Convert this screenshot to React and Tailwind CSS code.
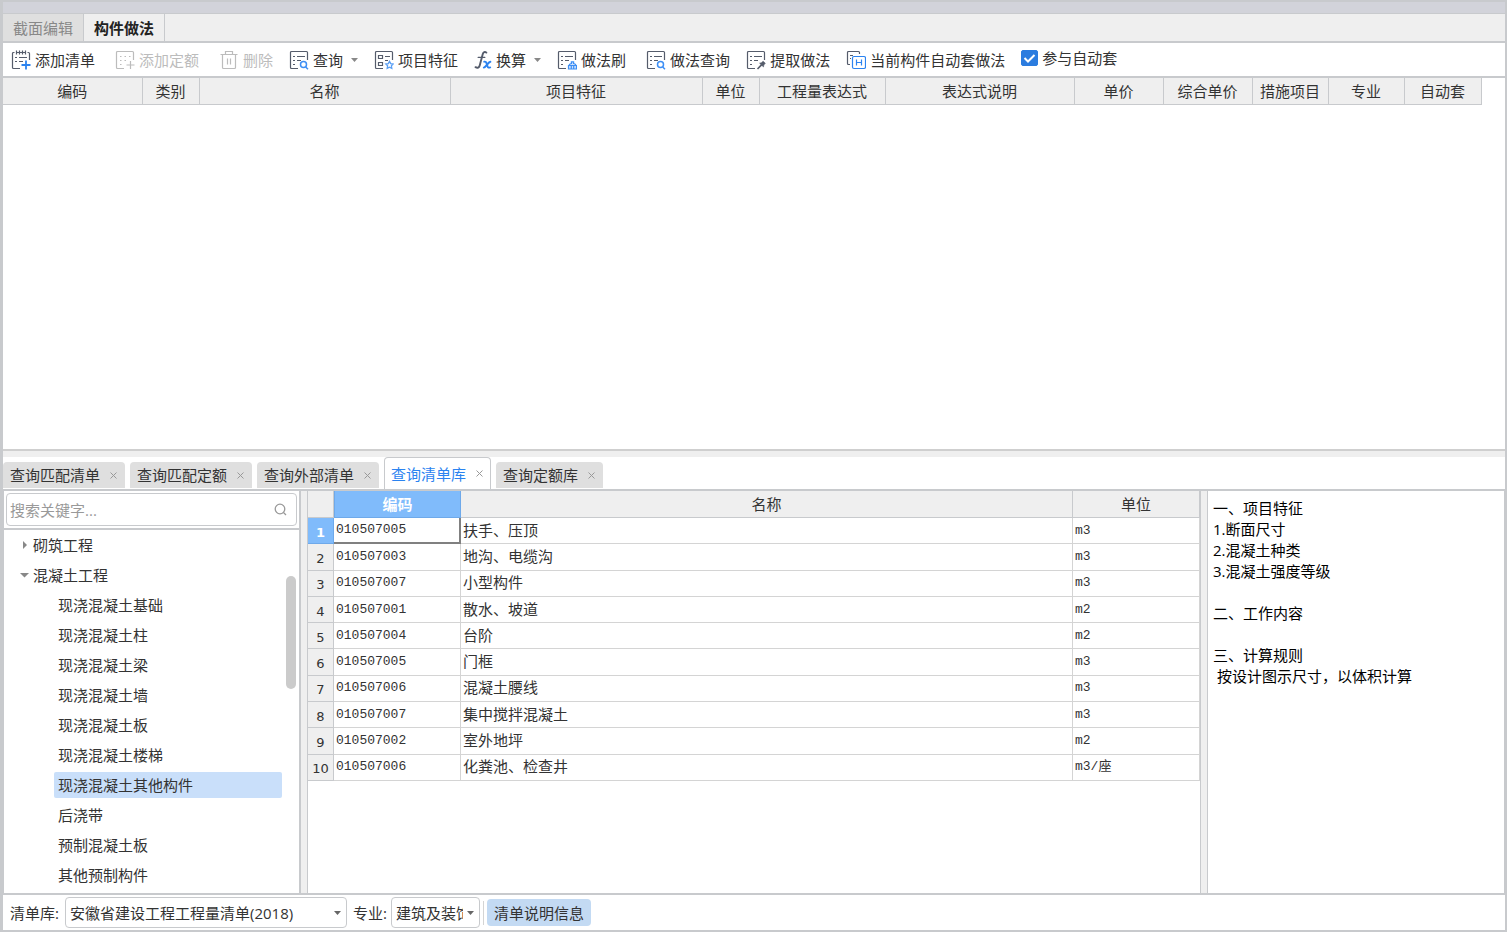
import React from 'react';

const FONT = "font-['Open_Sans','Noto_Sans_CJK_SC',sans-serif]";
const MONO = "font-['Liberation_Mono','Noto_Sans_CJK_SC',monospace]";

function Svg({ children }) {
  return (
    <svg width="20" height="20" viewBox="0 0 20 20" fill="none" stroke="currentColor"
      strokeWidth="1.2" className="shrink-0" aria-hidden="true">
      {children}
    </svg>
  );
}

// sheet outline with the lower right corner left open for a badge
function Sheet({ children }) {
  return (
    <Svg>
      <path d="M9 18.5H2.5a1 1 0 0 1-1-1v-15a1 1 0 0 1 1-1h15a1 1 0 0 1 1 1V10"/>
      {children}
    </Svg>
  );
}

const LINES = <path d="M4 6.5h2M8 6.5h8M4 10.5h2M8 10.5h4M4 14.5h2"/>;

const icons = {
  addList: (
    <Svg>
      <path d="M3.5 2.5h-1a1 1 0 0 0-1 1v14a1 1 0 0 0 1 1H9M16.5 2.5h1a1 1 0 0 1 1 1V10M5.5 2.5h9"/>
      <path d="M5.5.5v4M8.5.5v4M11.5.5v4M14.5.5v4"/>
      <path d="M4 7.5h2M8 7.5h8M4 11.5h2M8 11.5h4"/>
      <path className="stroke-[#2b83f0]" strokeWidth="1.8" d="M15 10.5v9M10.5 15h9"/>
    </Svg>
  ),
  addQuota: (
    <Sheet>
      <path d="M5 6.5h1.5M9.5 6.5H11M14 6.5h1.5M5 10.5h1.5M9.5 10.5H11M5 14.5h1.5"/>
      <path d="M15.5 11v8M11.5 15h8"/>
    </Sheet>
  ),
  trash: (
    <Svg>
      <path d="M1.5 4.5h17M6.5 4.5v-3h7v3M3.5 4.5v13a1 1 0 0 0 1 1h11a1 1 0 0 0 1-1v-13M8.5 8.5v6M11.5 8.5v6"/>
    </Svg>
  ),
  search: (
    <Sheet>
      {LINES}
      <g className="stroke-[#3d8ff5]" strokeWidth="1.5"><circle cx="14.5" cy="14.5" r="3"/><path d="m16.7 17 2.3 2.3"/></g>
    </Sheet>
  ),
  feature: (
    <Sheet>
      <path d="M4.5 5.5h4v3h-4zM4.5 12.5h4v3h-4zM11 6.5h5M11 10.5h3"/>
      <path className="stroke-[#5ba0f5]" strokeWidth="1.3" d="m15.5 11.4 1.2 2.2 2.5.4-1.8 1.8.4 2.5-2.3-1.1-2.3 1.1.4-2.5-1.8-1.8 2.5-.4z"/>
    </Sheet>
  ),
  fx: (
    <svg width="18" height="20" viewBox="0 0 18 20" fill="none" strokeLinecap="round" className="shrink-0" aria-hidden="true">
      <path stroke="currentColor" strokeWidth="1.9" d="M12.4 2.6c-1.5-1.3-3.1-.6-3.7 1.6L5.7 15.6c-.5 2-2.1 2.7-4.2 1.6"/>
      <path stroke="currentColor" strokeWidth="1.3" d="M4.2 7.4h6.6"/>
      <path className="stroke-[#2b83f0]" strokeWidth="1.9" d="M10.2 11.7c1.5-.4 2 .4 2.4 1.7l.9 2.8c.4 1.4 1.2 1.8 2.7 1.2M16.4 11.8c-2.3.2-4.2 5.4-6.6 5.8"/>
    </svg>
  ),
  brush: (
    <Sheet>
      {LINES}
      <path className="fill-[#cfe2fb] stroke-[#3d8ff5]" d="M11.5 15.5h8v3.5h-8zM12 15.3c.2-1.2 1-1.7 2.4-1.8v-1.7h2.2v1.7c1.4.1 2.2.6 2.4 1.8M14.3 15.8V19M16.7 15.8V19"/>
    </Sheet>
  ),
  extract: (
    <Sheet>
      {LINES}
      <path strokeWidth="1.6" d="m11.5 19 4.2-4.4"/>
      <path fill="currentColor" strokeWidth=".6" d="m13.6 13.2 3.9 3.7.3-1.9 1.5-1.8-2.2-2-1.7 1.6z"/>
    </Sheet>
  ),
  auto: (
    <Svg>
      <path d="M4 14.5H2.5a1 1 0 0 1-1-1v-11a1 1 0 0 1 1-1h10a1 1 0 0 1 1 1V4M4 5.5h3M4 8.5h1"/>
      <g className="stroke-[#2b83f0]">
        <rect x="6.5" y="6.5" width="13" height="12" rx="1.5"/>
        <path d="M10.5 9.5v6M15.5 9.5v6M10.5 12.5h5"/>
      </g>
    </Svg>
  ),
};

const tools = [
  { label: '添加清单', icon: 'addList' },
  { label: '添加定额', icon: 'addQuota', disabled: true, wide: true },
  { label: '删除', icon: 'trash', disabled: true, wide: true },
  { label: '查询', icon: 'search', menu: true },
  { label: '项目特征', icon: 'feature' },
  { label: '换算', icon: 'fx', menu: true },
  { label: '做法刷', icon: 'brush' },
  { label: '做法查询', icon: 'search', wide: true },
  { label: '提取做法', icon: 'extract' },
  { label: '当前构件自动套做法', icon: 'auto' },
];

const columns = [
  ['编码', 'w-[139px]'],
  ['类别', 'w-[57px]'],
  ['名称', 'w-[251px]'],
  ['项目特征', 'w-[252px]'],
  ['单位', 'w-[57px]'],
  ['工程量表达式', 'w-[126px]'],
  ['表达式说明', 'w-[189px]'],
  ['单价', 'w-[89px]'],
  ['综合单价', 'w-[89px]'],
  ['措施项目', 'w-[76px]'],
  ['专业', 'w-[76px]'],
  ['自动套', 'w-[77px]'],
];

const queryTabs = ['查询匹配清单', '查询匹配定额', '查询外部清单', '查询清单库', '查询定额库'];

const treeItems = [
  '现浇混凝土基础', '现浇混凝土柱', '现浇混凝土梁', '现浇混凝土墙', '现浇混凝土板', '现浇混凝土楼梯',
  '现浇混凝土其他构件', '后浇带', '预制混凝土板', '其他预制构件',
];

const rows = [
  ['010507005', '扶手、压顶', 'm3'],
  ['010507003', '地沟、电缆沟', 'm3'],
  ['010507007', '小型构件', 'm3'],
  ['010507001', '散水、坡道', 'm2'],
  ['010507004', '台阶', 'm2'],
  ['010507005', '门框', 'm3'],
  ['010507006', '混凝土腰线', 'm3'],
  ['010507007', '集中搅拌混凝土', 'm3'],
  ['010507002', '室外地坪', 'm2'],
  ['010507006', '化粪池、检查井', 'm3/座'],
];

const notes = `一、项目特征
1.断面尺寸
2.混凝土种类
3.混凝土强度等级

二、工作内容

三、计算规则
 按设计图示尺寸，以体积计算`;

function Caret({ className }) {
  return (
    <svg width="7" height="4" viewBox="0 0 7 4" className={className} aria-hidden="true">
      <path d="M0 0h7L3.5 4z" fill="currentColor"/>
    </svg>
  );
}

function Toolbar() {
  const [auto, setAuto] = React.useState(true);
  return (
    <div className="flex h-[35px] shrink-0 items-center gap-4 border-b-2 border-[#c8cacd] bg-white pl-2 text-[#333] whitespace-nowrap">
      {tools.map((t) => (
        <button key={t.label} type="button" disabled={t.disabled}
          className={`flex items-center gap-1 text-[#555c6b] disabled:text-[#bcbcbc] ${t.wide ? 'ml-1' : ''}`}>
          {icons[t.icon]}
          <span className={t.disabled ? '' : 'text-[#333]'}>{t.label}</span>
          {t.menu && <Caret className="ml-1 text-[#888]"/>}
        </button>
      ))}
      <label className="flex items-center gap-1 pb-1">
        <span className="relative flex h-4 w-[17px]">
          <input type="checkbox" checked={auto} onChange={(e) => setAuto(e.target.checked)}
            className="peer h-4 w-[17px] appearance-none rounded-xs border border-[#2b7cdf] bg-white checked:bg-[#2b7cdf]"/>
          <svg viewBox="0 0 17 16" fill="none" className="pointer-events-none absolute inset-0 hidden peer-checked:block" aria-hidden="true">
            <path d="m3.5 8 3.5 3.5L13.5 5" stroke="white" strokeWidth="2"/>
          </svg>
        </span>
        参与自动套
      </label>
    </div>
  );
}

function MethodTable() {
  return (
    <div className="min-h-40 flex-1 border-b-2 border-[#cfcfcf] bg-white pr-6">
      <table className="w-full table-fixed border-collapse">
        <thead>
          <tr className="h-[26px] bg-[#efefef]">
            {columns.map(([name, width]) => (
              <th key={name} className={`${width} border-r border-b border-[#c8cacd] p-0 font-normal whitespace-nowrap`}>{name}</th>
            ))}
          </tr>
        </thead>
      </table>
    </div>
  );
}

function QueryTabs({ active, onChange }) {
  return (
    <div className="flex h-[34px] shrink-0 items-end gap-[5px] border-b-2 border-[#c8cacd] bg-white">
      {queryTabs.map((t) => {
        const on = t === active;
        return (
          <div key={t} className={`flex items-center gap-2 rounded-t ${
            on ? 'h-8 border border-b-0 border-[#c8cacd] bg-white px-1.5 text-[#2b83f0]' : 'mb-px h-[26px] bg-[#dfdfdf] px-[7px]'
          }`}>
            <button type="button" onClick={() => onChange(t)}>{t}</button>
            <button type="button" aria-label={`关闭${t}`} className="flex w-2.5 justify-center text-[#999]">
              <svg width="7" height="7" viewBox="0 0 7 7" stroke="currentColor" aria-hidden="true"><path d="m.5.5 6 6M6.5.5l-6 6"/></svg>
            </button>
          </div>
        );
      })}
    </div>
  );
}

function TreePanel() {
  const [selected, setSelected] = React.useState('现浇混凝土其他构件');
  return (
    <aside className="flex w-[298px] shrink-0 flex-col border-r-2 border-l border-[#c8cacd] bg-white">
      <div className="border-b-2 border-[#c8cacd] p-0.5">
        <div className="flex h-[33px] items-center rounded border border-[#c8cacd] px-[3px]">
          <input aria-label="搜索关键字" placeholder="搜索关键字..." className="min-w-0 flex-1 outline-none placeholder:text-[#999]"/>
          <svg width="13" height="13" viewBox="0 0 13 13" fill="none" stroke="#999" strokeWidth="1.3" className="mr-1.5" aria-hidden="true">
            <circle cx="6" cy="6" r="4.8"/><path d="m9.5 9.5 2.5 2.5"/>
          </svg>
        </div>
      </div>
      <div className="flex flex-1">
        <ul className="flex-1 pb-[3px] pl-4">
          <li>
            <button type="button" className="flex h-[30px] items-center gap-1">
              <svg width="9" height="8" viewBox="0 0 9 8" fill="#888" aria-hidden="true"><path d="M3 0v8l4-4z"/></svg>
              砌筑工程
            </button>
          </li>
          <li>
            <button type="button" className="flex h-[30px] items-center gap-1">
              <svg width="9" height="8" viewBox="0 0 9 8" fill="#888" aria-hidden="true"><path d="M0 2h9L4.5 6.5z"/></svg>
              混凝土工程
            </button>
            <ul className="pl-[34px]">
              {treeItems.map((t) => (
                <li key={t} className="flex h-[30px] items-center">
                  <button type="button" onClick={() => setSelected(t)}
                    className={`h-[26px] w-full rounded-xs px-1 text-left ${t === selected ? 'bg-[#c9dffa]' : ''}`}>
                    {t}
                  </button>
                </li>
              ))}
            </ul>
          </li>
        </ul>
        <div className="w-[17px] px-1 pt-[46px]">
          <div className="h-[113px] w-2.5 rounded-full bg-[#cbcbcb]"/>
        </div>
      </div>
    </aside>
  );
}

function ListTable() {
  const th = 'border-r border-b border-[#c8cacd] p-0 font-normal';
  const td = 'border-r border-b border-[#d4d4d4] py-0 px-0.5';
  return (
    <div className="min-w-0 flex-1 border-x border-[#c8cacd] bg-white">
      <table className="h-[290px] w-full table-fixed border-separate border-spacing-0">
        <thead>
          <tr className="h-[27px] bg-[#efefef]">
            <th className={`${th} w-[26px]`} aria-label="序号"/>
            <th className="w-[127px] border border-t-0 border-[#6ea9ea] bg-[#80bbfb] p-0 font-semibold text-white">编码</th>
            <th className={th}>名称</th>
            <th className={`${th} w-[127px]`}>单位</th>
          </tr>
        </thead>
        <tbody>
          {rows.map(([code, name, unit], i) => (
            <tr key={i} className="h-[26px] leading-5">
              <th scope="row" className={`border-r border-b p-0 pt-1 font-['DejaVu_Sans',sans-serif] text-[13px] ${
                i === 0 ? 'border-[#6ea9ea] bg-[#80bbfb] font-bold text-white' : 'border-[#c8cacd] bg-[#efefef] font-normal'
              }`}>{i + 1}</th>
              <td className={`${MONO} text-[13px] ${i === 0 ? 'border-r-2 border-b-2 border-[#808080] py-0 px-0.5' : td}`}>{code}</td>
              <td className={`${td} pb-0.5`}>{name}</td>
              <td className={`${td} ${MONO} text-[13px]`}>{unit}</td>
            </tr>
          ))}
        </tbody>
      </table>
    </div>
  );
}

function Footer() {
  const select = 'h-[31px] w-full appearance-none rounded border border-[#c8cacd] bg-white pl-1';
  return (
    <footer className="flex h-[39px] shrink-0 items-center border-y-2 border-[#c8cacd] bg-white pl-[7px] whitespace-nowrap">
      <label htmlFor="lib" className="w-[55px]">清单库:</label>
      <div className="relative w-[282px]">
        <select id="lib" className={`${select} pr-5`}>
          <option>安徽省建设工程工程量清单(2018)</option>
        </select>
        <Caret className="pointer-events-none absolute top-3.5 right-1.5 text-[#666]"/>
      </div>
      <label htmlFor="major" className="ml-1.5 w-[38px]">专业:</label>
      <div className="relative w-[89px]">
        <select id="major" className={`${select} pr-4`}>
          <option>建筑及装饰工程</option>
        </select>
        <Caret className="pointer-events-none absolute top-3.5 right-1.5 text-[#666]"/>
      </div>
      <div className="mx-[3px] h-6 w-px bg-[#d4d4d4]"/>
      <button type="button" className="h-[27px] rounded-sm bg-[#c3daf3] px-[7px]">清单说明信息</button>
    </footer>
  );
}

export default function App() {
  const [tab, setTab] = React.useState('查询清单库');
  return (
    <div className={`${FONT} flex min-h-screen flex-col border-t-2 border-r-2 border-l-3 border-[#c8cacd] bg-[#efefef] text-[15px] leading-5 text-[#333]`}>
      <div className="h-3 shrink-0 border-b border-[#c8cacd] bg-[#d2d3da]"/>
      <nav className="flex h-[29px] shrink-0 border-b-2 border-[#c8cacd]">
        <button type="button" className="border-r border-[#c8cacd] bg-[#dfdfdf] px-2.5 text-[#888]">截面编辑</button>
        <button type="button" className="border-r border-[#c8cacd] px-2.5 font-bold text-[#222]">构件做法</button>
      </nav>
      <Toolbar/>
      <MethodTable/>
      <div className="h-1.5 shrink-0"/>
      <QueryTabs active={tab} onChange={setTab}/>
      <main className="flex shrink-0 gap-1.5">
        <TreePanel/>
        <ListTable/>
        <section className="w-[298px] shrink-0 border-x border-[#c8cacd] bg-white px-[5px] pt-[7px] leading-[21px] whitespace-pre-wrap text-black">{notes}</section>
      </main>
      <Footer/>
    </div>
  );
}
